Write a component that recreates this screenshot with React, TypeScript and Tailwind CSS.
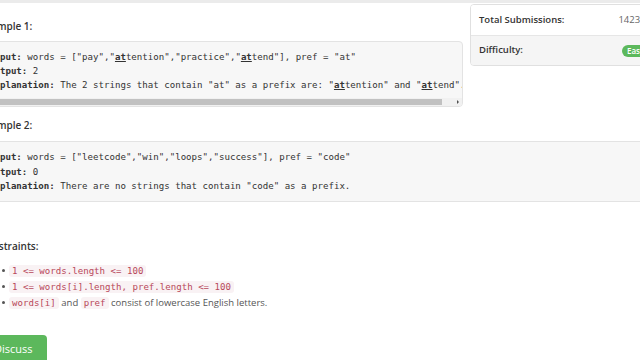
const mono = "font-['DejaVu_Sans_Mono',monospace]";

function Chip({ children }: { children: React.ReactNode }) {
  return (
    <code
      className={`${mono} text-[9.1px] bg-[#f9f2f4] text-[#b8485a] rounded-[3px] px-[3px] py-[1px]`}
    >
      {children}
    </code>
  );
}

function Bullet({ children }: { children: React.ReactNode }) {
  return (
    <li className="flex items-center">
      <span className="w-[3px] h-[3px] rounded-full bg-[#555] ml-[22px] mr-[4px]" />
      <span>{children}</span>
    </li>
  );
}

function Scrollbar() {
  return (
    <div className="flex items-center h-[8px] mt-[6px] bg-[#f1f1f1]">
      <div className="flex-1 h-[6px] bg-[#c1c1c1]" />
      <div className="w-[12px]" />
      <div className="w-[8px] flex items-center justify-center">
        <div className="w-0 h-0 border-y-[2px] border-y-transparent border-l-[2px] border-l-[#505050]" />
      </div>
    </div>
  );
}

export default function App() {
  return (
    <div className="w-[640px] h-[360px] overflow-hidden bg-white font-['Open_Sans',sans-serif] text-[#333]">
      <div className="h-[3px] bg-[#ebebeb]" />
      <div className="flow-root w-[680px] -ml-[20px]">
        <div className="float-right w-[190px] ml-[7px] mt-[1px] border border-[#e0e0e0] rounded-[4px] overflow-hidden text-[9.5px]">
          <div className="flex items-center h-[30px] px-[8px] bg-white">
            <span className="w-[143px] font-semibold text-[#333]">Total Submissions:</span>
            <span className="text-[#666]">142382</span>
          </div>
          <div className="flex items-center h-[30px] px-[8px] bg-[#f5f5f5] border-t border-[#e6e6e6]">
            <span className="w-[143px] font-semibold text-[#333]">Difficulty:</span>
            <span className="h-[12px] px-[5px] rounded-full bg-[#5cb85c] text-white text-[8px] font-semibold leading-[12px]">
              Easy
            </span>
          </div>
        </div>

        <div className="mt-[15px] mb-[7px] h-[16px] leading-[16px] text-[10px] font-semibold">
          Example 1:
        </div>
        <div className="overflow-hidden border border-[#e3e3e3] rounded-[4px] bg-[#f7f7f7]">
          <div className={`${mono} text-[9.1px] leading-[14px] pt-[8px] pl-[8px] whitespace-pre`}>
            <div>
              <b>Input:</b> words = ["pay","<b><u>at</u></b>tention","practice","<b><u>at</u></b>tend"], pref = "at"
            </div>
            <div>
              <b>Output:</b> 2
            </div>
            <div>
              <b>Explanation:</b> The 2 strings that contain "at" as a prefix are: "<b><u>at</u></b>tention" and "<b><u>at</u></b>tend".
            </div>
          </div>
          <Scrollbar />
        </div>

        <div className="mt-[10px] mb-[8px] h-[16px] leading-[16px] text-[10px] font-semibold">
          Example 2:
        </div>
        <div className="overflow-hidden border border-[#e3e3e3] rounded-[4px] bg-[#f7f7f7]">
          <div className={`${mono} text-[9.1px] leading-[14.5px] pt-[8px] pb-[7px] pl-[8px] whitespace-pre`}>
            <div>
              <b>Input:</b> words = ["leetcode","win","loops","success"], pref = "code"
            </div>
            <div>
              <b>Output:</b> 0
            </div>
            <div>
              <b>Explanation:</b> There are no strings that contain "code" as a prefix.
            </div>
          </div>
        </div>

        <div className="mt-[36px] h-[16px] leading-[16px] text-[10px] font-semibold">
          Constraints:
        </div>
        <ul className="mt-[9px] text-[9.5px] leading-[16px] text-[#555]">
          <Bullet>
            <Chip>1 &lt;= words.length &lt;= 100</Chip>
          </Bullet>
          <Bullet>
            <Chip>1 &lt;= words[i].length, pref.length &lt;= 100</Chip>
          </Bullet>
          <Bullet>
            <Chip>words[i]</Chip> and <Chip>pref</Chip> consist of lowercase English letters.
          </Bullet>
        </ul>

        <div className="mt-[24px]">
          <button className="h-[28px] px-[14px] rounded-[4px] bg-[#5cb85c] text-white text-[11px]">
            Discuss
          </button>
        </div>
      </div>
    </div>
  );
}
